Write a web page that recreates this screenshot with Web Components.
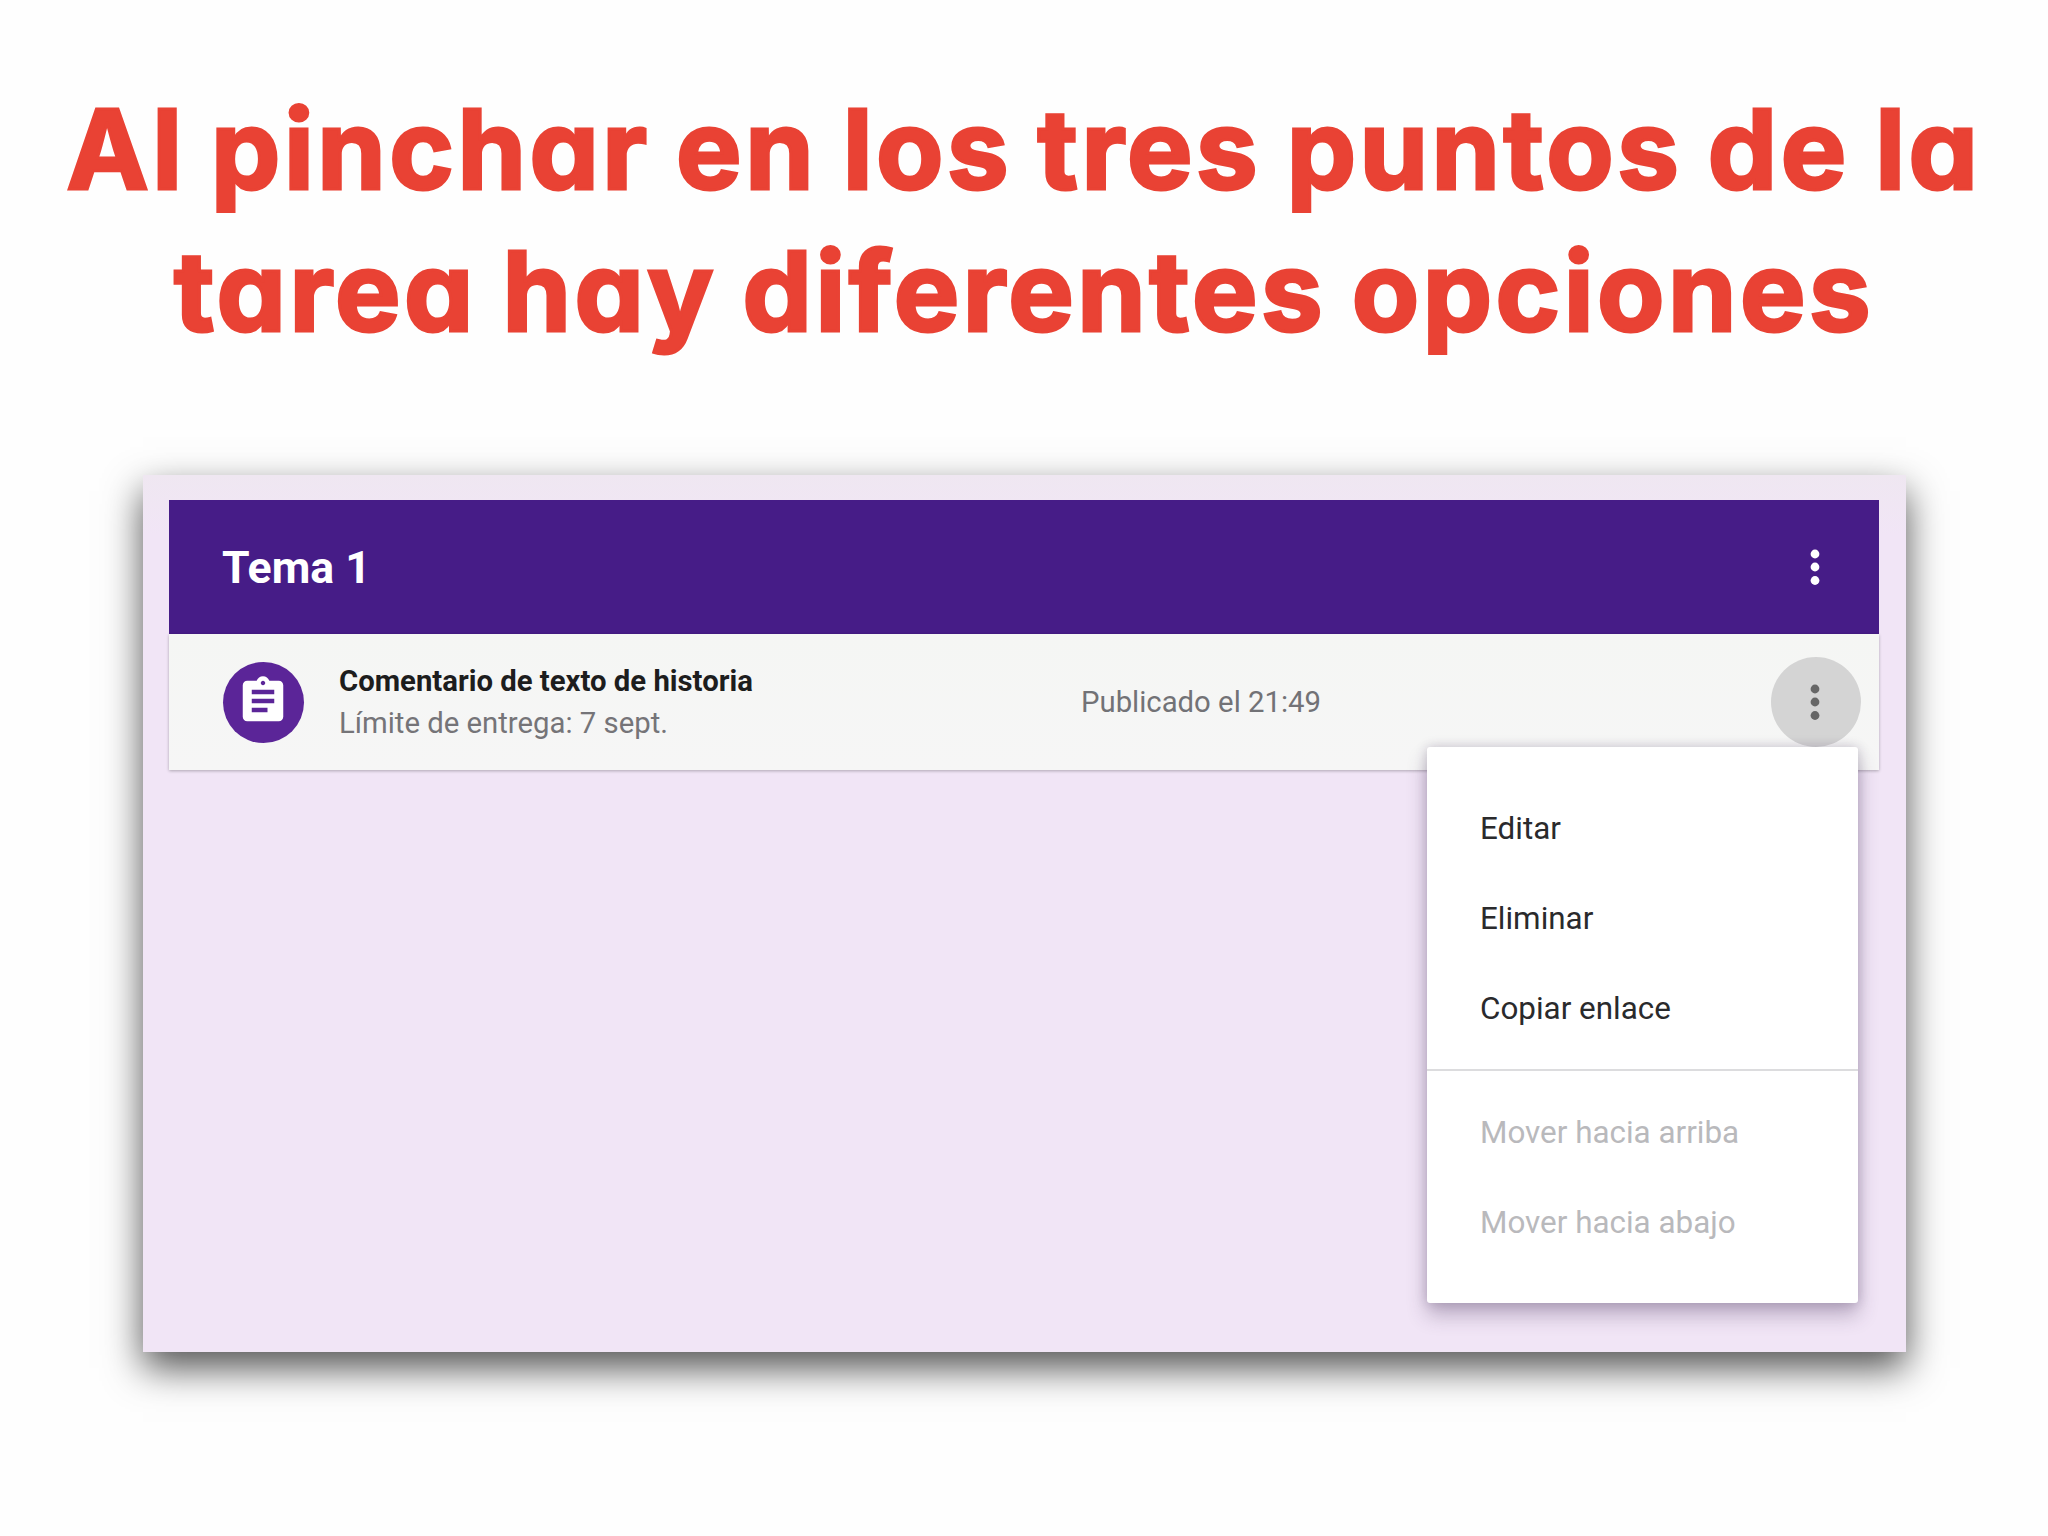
<!DOCTYPE html>
<html lang="es">
<head>
<meta charset="utf-8">
<title>Opciones de la tarea</title>
<style>
html,body{margin:0;padding:0;background:#fefefe;}
body{width:2048px;height:1536px;overflow:hidden;font-family:Roboto,"Liberation Sans",sans-serif;}
</style>
</head>
<body>
<slide-page>
  <slide-title slot="title">
    <span>Al pinchar en los tres puntos de la</span>
    <span>tarea hay diferentes opciones</span>
  </slide-title>
  <topic-panel>
    <topic-header slot="header">Tema 1</topic-header>
    <assignment-row title-text="Comentario de texto de historia" due="Límite de entrega: 7 sept." posted="Publicado el 21:49"></assignment-row>
    <popup-menu slot="overlay">
      <menu-item>Editar</menu-item>
      <menu-item>Eliminar</menu-item>
      <menu-item>Copiar enlace</menu-item>
      <menu-item slot="disabled" disabled>Mover hacia arriba</menu-item>
      <menu-item slot="disabled" disabled>Mover hacia abajo</menu-item>
    </popup-menu>
  </topic-panel>
</slide-page>
<script>
function shadow(el, html){ el.attachShadow({mode:'open'}).innerHTML = html; }
class SlidePage extends HTMLElement{
  constructor(){super();shadow(this,`<style>
    :host{display:block;width:2048px;height:1536px;background:#fefefe;}
    .title{display:block;padding-top:78px;height:384px;box-sizing:border-box;}
  </style><div class="title"><slot name="title"></slot></div><slot></slot>`);}
}
class SlideTitle extends HTMLElement{
  constructor(){super();shadow(this,`<style>
    :host{display:block;text-align:center;color:#e94234;
      font:700 110px/142px Inter,"Open Sans",sans-serif;
      font-feature-settings:"cv11" 1,"ss03" 1;
      letter-spacing:3.5px;word-spacing:-4px;
      -webkit-text-stroke:3px #e94234;white-space:nowrap;}
    ::slotted(span){display:block;}
  </style><slot></slot>`);}
}
class TopicPanel extends HTMLElement{
  constructor(){super();shadow(this,`<style>
    :host{display:block;position:relative;box-sizing:border-box;
      margin:91px 0 0 143px;width:1763px;height:877px;padding:25px 27px 0 26px;
      background:linear-gradient(#efe7f1,#f1e5f6 60px);
      box-shadow:0 16px 36px rgba(0,0,0,.68);}
  </style><slot name="header"></slot><slot></slot><slot name="overlay"></slot>`);}
}
class MoreButton extends HTMLElement{
  constructor(){super();shadow(this,`<style>
    :host{display:flex;align-items:center;justify-content:center;flex:none;width:90px;height:90px;
      border-radius:50%;color:var(--dots,#666);background:var(--disc,transparent);}
    svg{display:block;width:10px;height:36px;fill:currentColor;margin-right:2px;}
  </style><svg viewBox="0 0 10 36" aria-hidden="true"><circle cx="5" cy="5" r="4.4"/><circle cx="5" cy="18" r="4.4"/><circle cx="5" cy="31.5" r="4.4"/></svg>`);}
}
class TopicHeader extends HTMLElement{
  constructor(){super();shadow(this,`<style>
    :host{display:flex;align-items:center;justify-content:space-between;box-sizing:border-box;height:134px;
      padding:0 18px 0 53px;background:#461c87;color:#fff;font:700 44.6px/1 Roboto,sans-serif;}
    span{position:relative;top:1px;}
    more-button{--dots:#fff;}
  </style><span><slot></slot></span><more-button></more-button>`);}
}
class AssignmentRow extends HTMLElement{
  constructor(){super();shadow(this,`<style>
    :host{display:flex;align-items:center;box-sizing:border-box;height:136px;padding:0 18px 0 54px;
      background:linear-gradient(#f5f6f4,#f6f6f6);box-shadow:0 1px 3px rgba(0,0,0,.28);font-family:Roboto,sans-serif;}
    .ic{flex:none;width:81px;height:81px;border-radius:50%;background:#5b2598;display:flex;align-items:center;justify-content:center;}
    .ic svg{width:54px;height:54px;fill:#fff;display:block;margin:-3px 2px 0 0;}
    .txt{flex:none;width:742px;margin-left:35px;}
    .t{font:700 29.3px/42px Roboto,sans-serif;color:#1d1d1d;}
    .d{font:400 29.3px/43px Roboto,sans-serif;color:#757478;}
    .p{flex:1;font:400 29.3px/1 Roboto,sans-serif;color:#727276;padding-top:1px;}
    more-button{--disc:#d4d4d4;--dots:#666;}
  </style>
  <div class="ic"><svg viewBox="0 0 24 24" aria-hidden="true"><path d="M19 3h-4.18C14.4 1.84 13.3 1 12 1c-1.3 0-2.4.84-2.82 2H5c-1.1 0-2 .9-2 2v14c0 1.1.9 2 2 2h14c1.1 0 2-.9 2-2V5c0-1.1-.9-2-2-2zm-7 0c.55 0 1 .45 1 1s-.45 1-1 1-1-.45-1-1 .45-1 1-1zm2 14H7v-2h7v2zm3-4H7v-2h10v2zm0-4H7V7h10v2z"/></svg></div>
  <div class="txt"><div class="t">${this.getAttribute('title-text')}</div><div class="d">${this.getAttribute('due')}</div></div>
  <div class="p">${this.getAttribute('posted')}</div>
  <more-button></more-button>`);}
}
class PopupMenu extends HTMLElement{
  constructor(){super();shadow(this,`<style>
    :host{display:block;position:absolute;left:1284px;top:272px;width:431px;height:556px;box-sizing:border-box;
      background:#fff;border-radius:3px;box-shadow:0 12px 20px rgba(60,40,80,.3),0 0 12px rgba(60,40,80,.22);padding-top:37px;}
    .sep{height:2px;background:#dcdcde;margin-top:15px;}
    .low{padding-top:17px;}
  </style><slot></slot><div class="sep"></div><div class="low"><slot name="disabled"></slot></div>`);}
}
class MenuItem extends HTMLElement{
  constructor(){super();shadow(this,`<style>
    :host{display:block;height:90px;padding-left:53px;font:400 31.4px/90px Roboto,sans-serif;color:#2a2a2c;white-space:nowrap;}
    :host([disabled]){color:#b9b9bc;}
  </style><slot></slot>`);}
}
customElements.define('slide-page',SlidePage);
customElements.define('slide-title',SlideTitle);
customElements.define('topic-panel',TopicPanel);
customElements.define('more-button',MoreButton);
customElements.define('topic-header',TopicHeader);
customElements.define('assignment-row',AssignmentRow);
customElements.define('popup-menu',PopupMenu);
customElements.define('menu-item',MenuItem);
</script>
</body>
</html>
